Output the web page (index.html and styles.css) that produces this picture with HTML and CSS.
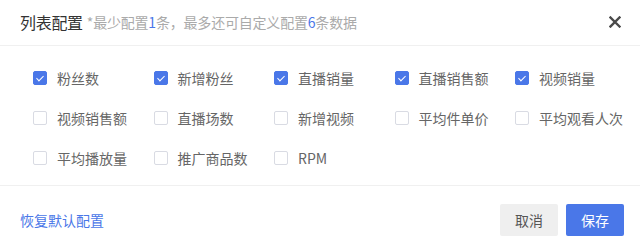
FILE: index.html
```html
<!DOCTYPE html>
<html lang="zh-CN">
<head>
<meta charset="utf-8">
<link rel="stylesheet" href="styles.css">
</head>
<body>
<div class="dialog">
  <div class="header">
    <span class="title">列表配置</span>
    <span class="hint">*最少配置<em>1</em>条，最多还可自定义配置<em>6</em>条数据</span>
    <span class="close" aria-label="关闭">
      <svg width="12" height="12" viewBox="0 0 12 12"><path d="M1.5 1.5 L10.5 10.5 M10.5 1.5 L1.5 10.5" stroke="#4a4a4a" stroke-width="2.4" stroke-linecap="square"/></svg>
    </span>
  </div>
  <div class="body">
    <label class="opt"><span class="box on"></span><span>粉丝数</span></label>
    <label class="opt"><span class="box on"></span><span>新增粉丝</span></label>
    <label class="opt"><span class="box on"></span><span>直播销量</span></label>
    <label class="opt"><span class="box on"></span><span>直播销售额</span></label>
    <label class="opt"><span class="box on"></span><span>视频销量</span></label>
    <label class="opt"><span class="box"></span><span>视频销售额</span></label>
    <label class="opt"><span class="box"></span><span>直播场数</span></label>
    <label class="opt"><span class="box"></span><span>新增视频</span></label>
    <label class="opt"><span class="box"></span><span>平均件单价</span></label>
    <label class="opt"><span class="box"></span><span>平均观看人次</span></label>
    <label class="opt"><span class="box"></span><span>平均播放量</span></label>
    <label class="opt"><span class="box"></span><span>推广商品数</span></label>
    <label class="opt"><span class="box"></span><span>RPM</span></label>
  </div>
  <div class="footer">
    <span class="reset">恢复默认配置</span>
    <div class="actions">
      <span class="btn cancel">取消</span>
      <span class="btn save">保存</span>
    </div>
  </div>
</div>
</body>
</html>
```
FILE: styles.css
```css
* { box-sizing: border-box; }
html, body {
  margin: 0;
  padding: 0;
  background: #fff;
  font-family: "Noto Sans CJK SC", "Noto Sans", "Liberation Sans", sans-serif;
}
.dialog {
  width: 640px;
  height: 249px;
  background: #fff;
}
.header {
  height: 46px;
  border-bottom: 1px solid #f0f0f0;
  display: flex;
  align-items: center;
  padding: 0 19px 2px 20px;
}
.title {
  font-size: 16px;
  color: #333;
  letter-spacing: -0.3px;
}
.hint {
  font-size: 14px;
  color: #aaa;
  margin-left: 4px;
  margin-top: 1px;
  letter-spacing: -0.2px;
}
.hint em {
  font-style: normal;
  color: #4a77e8;
}
.close {
  margin-left: auto;
  display: flex;
  width: 12px;
  height: 12px;
}
.body {
  display: grid;
  grid-template-columns: repeat(5, 120.5px);
  grid-auto-rows: 40px;
  padding: 12px 0 7px 33px;
  border-bottom: 1px solid #f0f0f0;
}
.opt {
  display: flex;
  align-items: center;
  font-size: 14px;
  color: #666;
}
.box {
  width: 14px;
  height: 14px;
  border: 1px solid #d9dbe3;
  border-radius: 2px;
  margin-right: 10px;
  flex: none;
  position: relative;
}
.box.on {
  background: #4a77e8;
  border-color: #4a77e8;
}
.box.on::after {
  content: "";
  position: absolute;
  left: 4px;
  top: 2px;
  width: 3px;
  height: 6px;
  border: solid #fff;
  border-width: 0 1.5px 1.5px 0;
  transform: rotate(45deg);
}
.footer {
  display: flex;
  align-items: center;
  padding: 18px 16px 0 20px;
}
.reset {
  font-size: 14px;
  color: #4a77e8;
}
.actions {
  margin-left: auto;
  display: flex;
  gap: 8px;
}
.btn {
  width: 58px;
  height: 32px;
  display: flex;
  align-items: center;
  justify-content: center;
  font-size: 14px;
  border-radius: 2px;
}
.cancel {
  background: #efefef;
  color: #555;
}
.save {
  background: #4a77e8;
  color: #fff;
}
```
